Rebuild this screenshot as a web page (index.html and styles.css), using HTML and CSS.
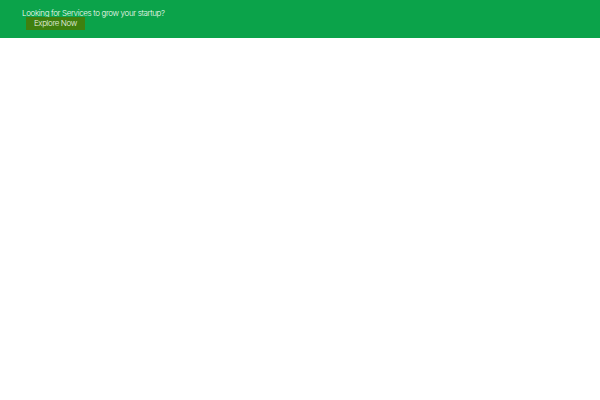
FILE: index.html
```html
<!DOCTYPE html>
<html>
<head>
<meta charset="utf-8">
<link rel="stylesheet" href="styles.css">
</head>
<body>
<div class="banner">
  <div class="banner-inner">
    <p class="banner-text">Looking for Services to grow your startup?</p>
    <a class="banner-btn" href="#">Explore Now</a>
  </div>
</div>
</body>
</html>
```
FILE: styles.css
```css
html, body { margin: 0; padding: 0; background: #fff; }
body { font-family: "Inter", "Open Sans", sans-serif; }
.banner { background: #0ba34a; height: 38px; }
.banner-inner { padding: 9px 0 0 22px; display: flex; flex-direction: column; align-items: flex-start; }
.banner-text { margin: 0; color: #f4fbf5; font-size: 8px; line-height: 8px; font-weight: 300; letter-spacing: -0.36px; }
.banner-btn { margin: 0 0 0 4px; display: block; background: #3f800f; color: #eef4e6; font-size: 8px; line-height: 13px; padding: 0 8px; text-decoration: none; font-weight: 300; letter-spacing: -0.4px; }
```
